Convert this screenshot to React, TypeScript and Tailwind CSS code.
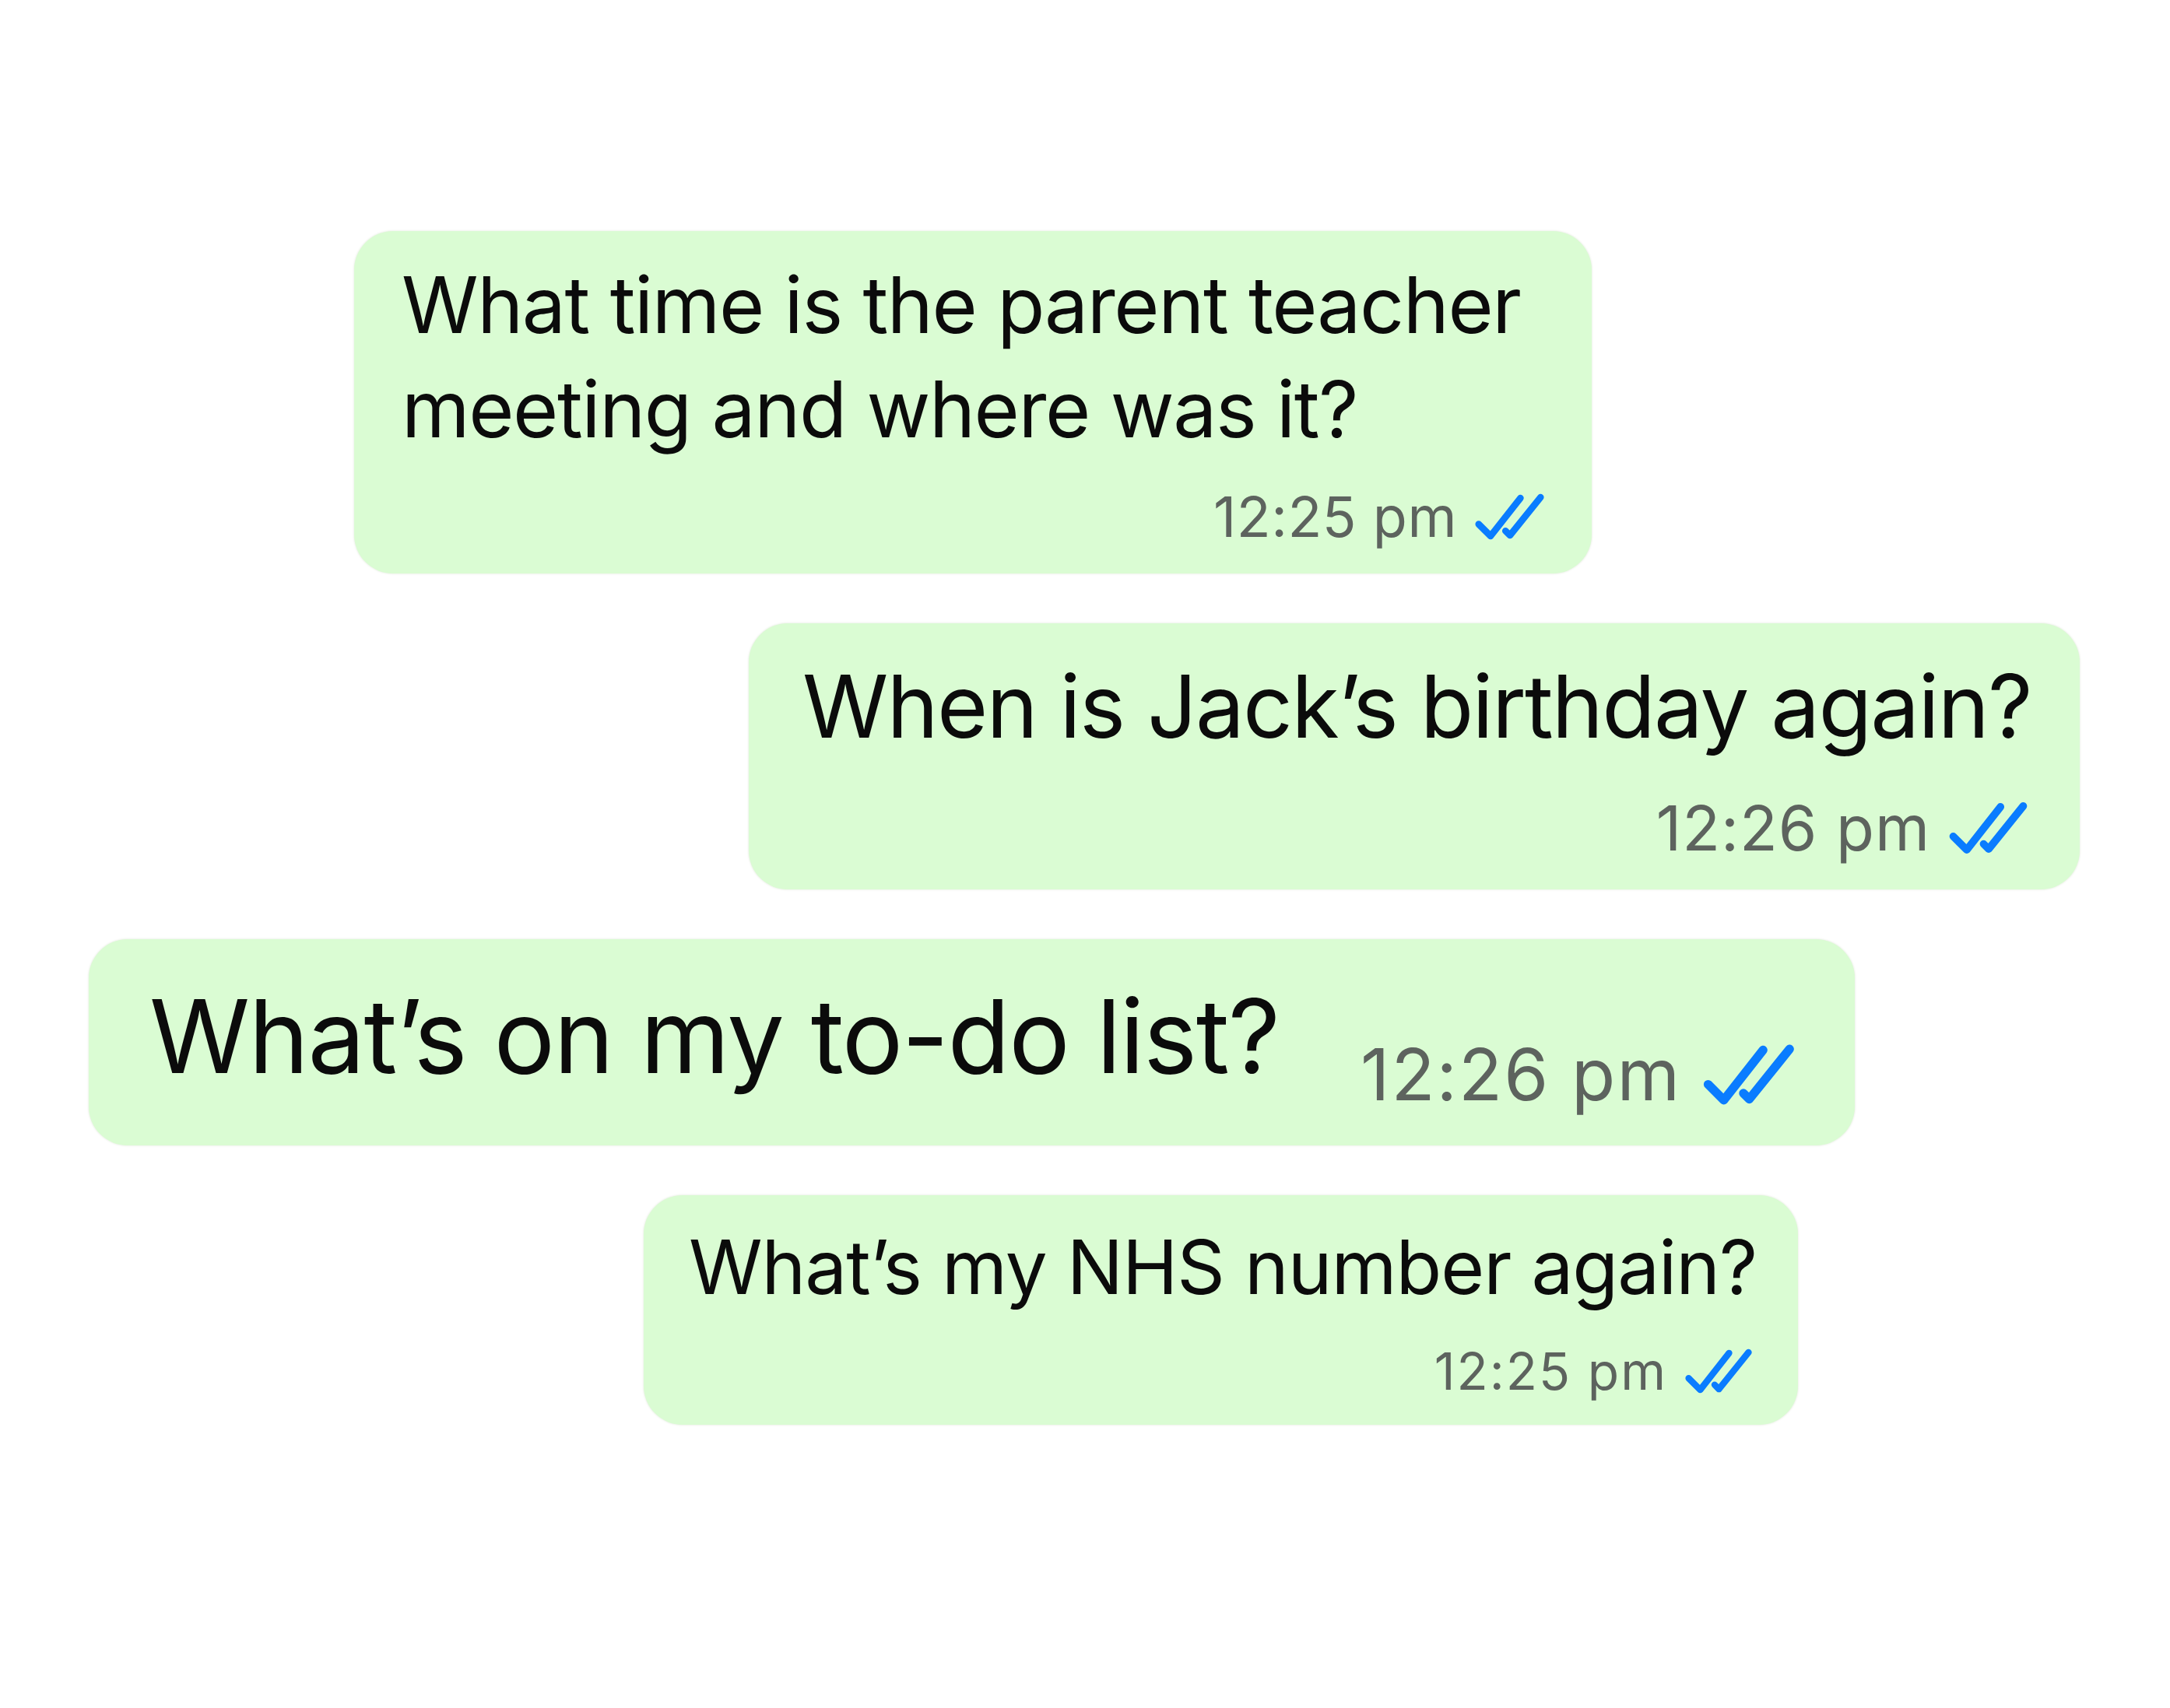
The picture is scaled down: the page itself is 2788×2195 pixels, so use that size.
import React from 'react';

// double tick, drawn to match the blue "read" marks
function Ticks({ className }: { className: string }) {
    return (
        <svg className={className} viewBox="0 0 96 64" fill="none" stroke="#0a7cff" strokeWidth={9} strokeLinecap="round" strokeLinejoin="round">
            <path d="M6 42 L22 58 L62 7" />
            <path d="M42 51 L48 57 L89 6" />
        </svg>
    );
}

export default function App() {
    return (
        <div className="w-[2788px] h-[2195px] bg-white flex flex-col gap-[64px] pt-[297px] font-['Inter','Noto_Sans',sans-serif] text-[#0b0b0b]">

            {/* parent teacher meeting */}
            <div className="ml-[455px] w-[1590px] h-[440px] rounded-[50px] bg-[#dafcd3] shadow-[0_0_3px_#dde5d6] pl-[61px] pr-[59px] pt-[28px] flex flex-col">
                <p className="text-[100px] leading-[134px] tracking-[-1.4px] whitespace-pre-line">
                    {"What time is the parent teacher\nmeeting and where was it?"}
                </p>
                <div className="mt-[35px] flex items-center justify-end gap-[22px]">
                    <span className="text-[72px] leading-none text-[#5d635e] tracking-[0.5px]">12:25 pm</span>
                    <Ticks className="w-[92px] h-[62px]" />
                </div>
            </div>

            {/* birthday */}
            <div className="ml-[962px] w-[1710px] h-[342px] rounded-[50px] bg-[#dafcd3] shadow-[0_0_3px_#dde5d6] pl-[69px] pr-[65px] pt-[39px] flex flex-col">
                <p className="text-[112px] leading-[134px] tracking-[-1.8px] whitespace-nowrap">When is Jack’s birthday again?</p>
                <div className="mt-[50px] flex items-center justify-end gap-[23px]">
                    <span className="text-[80px] leading-none text-[#5d635e] tracking-[1px]">12:26 pm</span>
                    <Ticks className="w-[104px] h-[70px]" />
                </div>
            </div>

            {/* to-do list */}
            <div className="ml-[114px] w-[2269px] h-[265px] rounded-[50px] bg-[#dafcd3] shadow-[0_0_3px_#dde5d6] pl-[78px] pr-[75px] pt-[59px] flex items-start justify-between">
                <p className="text-[131px] leading-[131px] tracking-[-1.5px] whitespace-nowrap">What’s on my to-do list?</p>
                <div className="mt-[69px] flex items-center gap-[27px]">
                    <span className="text-[92px] leading-none text-[#5d635e] tracking-[2px]">12:26 pm</span>
                    <Ticks className="w-[121px] h-[82px]" />
                </div>
            </div>

            {/* NHS number */}
            <div className="ml-[827px] w-[1483px] h-[295px] rounded-[50px] bg-[#dafcd3] shadow-[0_0_3px_#dde5d6] pl-[58px] pr-[57px] pt-[32px] flex flex-col">
                <p className="text-[96px] leading-[120px] tracking-[-1px] whitespace-nowrap">What’s my NHS number again?</p>
                <div className="mt-[41px] flex items-center justify-end gap-[22px]">
                    <span className="text-[66px] leading-none text-[#5d635e] tracking-[2px]">12:25 pm</span>
                    <Ticks className="w-[89px] h-[60px]" />
                </div>
            </div>
        </div>
    );
}
